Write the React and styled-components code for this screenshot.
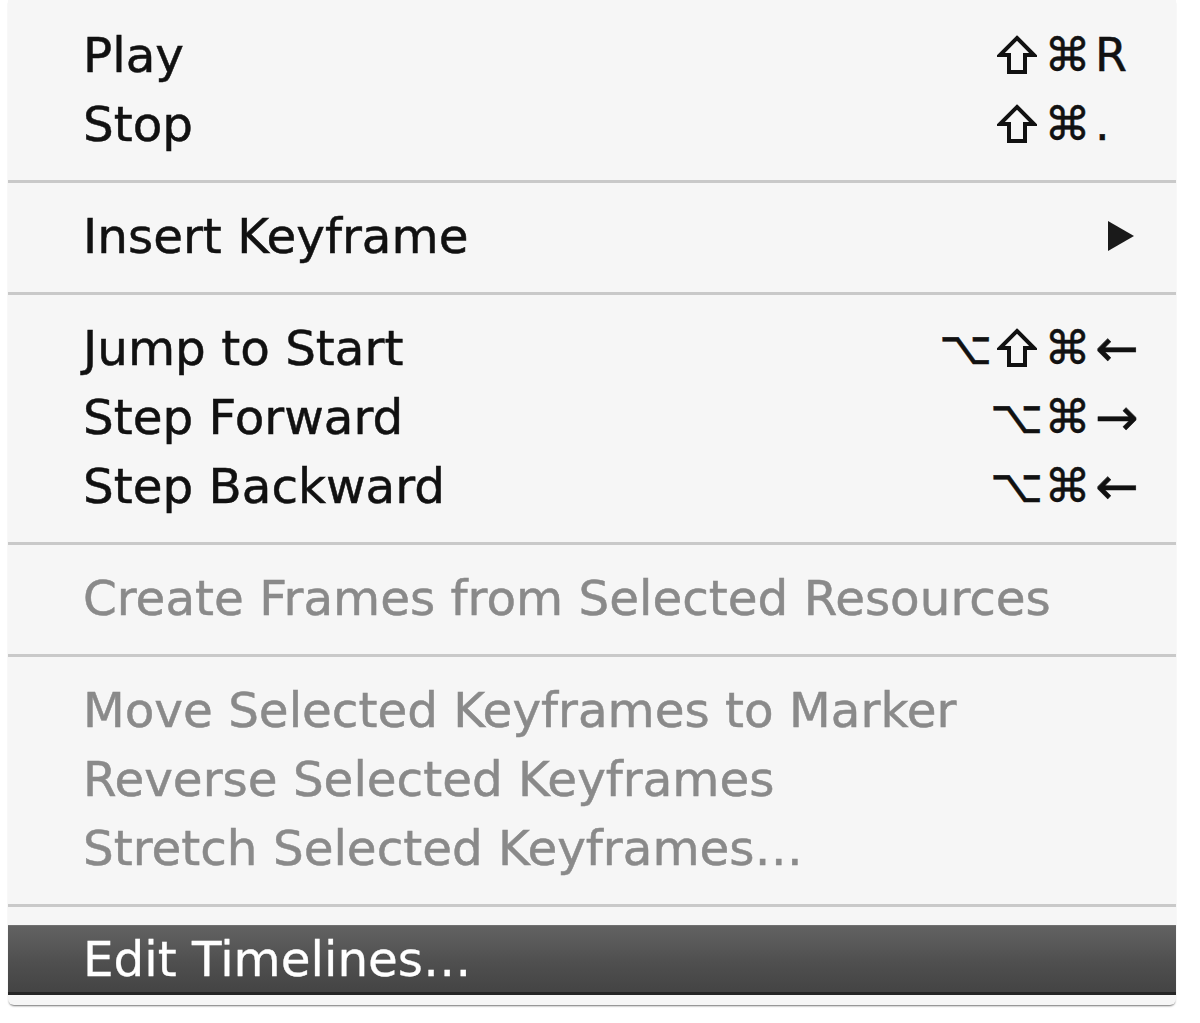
import React from 'react';
import styled, { createGlobalStyle } from 'styled-components';

const GlobalStyle = createGlobalStyle`
  html, body {
    margin: 0;
    padding: 0;
    background: #ffffff;
  }
  body {
    font-family: 'DejaVu Sans', 'Liberation Sans', sans-serif;
  }
`;

const Page = styled.div`
  width: 1200px;
  height: 1023px;
  background: #ffffff;
  padding: 0 24px 0 8px;
  box-sizing: border-box;
`;

const Menu = styled.div`
  width: 1168px;
  background: #f6f6f6;
  padding: 20px 0 10px;
  border-radius: 0 0 6px 6px;
  box-shadow: 0 2px 2px -1px rgba(0, 0, 0, 0.55);
`;

const Row = styled.div`
  height: ${({ $active }) => ($active ? '70px' : '69px')};
  display: flex;
  align-items: center;
  padding: 0 31px 0 75px;
  font-size: 48.4px;
  -webkit-text-stroke: ${({ $active }) => ($active ? '0.3px' : '0.5px')};
  color: ${({ $disabled, $active }) =>
    $active ? '#ffffff' : $disabled ? '#8a8a8a' : '#111111'};
  background: ${({ $active }) =>
    $active ? 'linear-gradient(#626262, #4f4f4f 55%, #444444)' : 'transparent'};
  border-top: ${({ $active }) => ($active ? '1px solid #707070' : 'none')};
  border-bottom: ${({ $active }) => ($active ? '3px solid #262626' : 'none')};
  box-sizing: border-box;
`;

const Label = styled.span`
  flex: 1;
  white-space: nowrap;
`;

const Shortcut = styled.span`
  display: flex;
  align-items: center;
  font-size: 46px;
`;

const Cell = styled.span`
  width: ${({ $key }) => ($key ? '50px' : '51px')};
  margin-left: ${({ $key }) => ($key ? '2px' : '0')};
  display: flex;
  justify-content: ${({ $key }) => ($key ? 'flex-start' : 'center')};
  align-items: center;
  font-size: ${({ $arrow }) => ($arrow ? '52px' : 'inherit')};
`;

const Separator = styled.div`
  height: 3px;
  margin: 22px 0 18px;
  background: #c9c9c9;
`;

const Arrow = styled.svg`
  width: 34px;
  height: 34px;
  margin-right: 7px;
`;

const ShiftIcon = () => (
  <svg width="40" height="40" viewBox="0 0 40 40">
    <path
      d="M20 3 L37 20 L28 20 L28 37 L12 37 L12 20 L3 20 Z"
      fill="none"
      stroke="#111"
      strokeWidth="4"
      strokeLinejoin="miter"
    />
  </svg>
);

const glyph = (g) => (g === 'shift' ? <ShiftIcon /> : g);

const groups = [
  [
    { label: 'Play', mods: ['shift', '⌘'], key: 'R' },
    { label: 'Stop', mods: ['shift', '⌘'], key: '.' },
  ],
  [{ label: 'Insert Keyframe', submenu: true }],
  [
    { label: 'Jump to Start', mods: ['⌥', 'shift', '⌘'], key: '←' },
    { label: 'Step Forward', mods: ['⌥', '⌘'], key: '→' },
    { label: 'Step Backward', mods: ['⌥', '⌘'], key: '←' },
  ],
  [{ label: 'Create Frames from Selected Resources', disabled: true }],
  [
    { label: 'Move Selected Keyframes to Marker', disabled: true },
    { label: 'Reverse Selected Keyframes', disabled: true },
    { label: 'Stretch Selected Keyframes…', disabled: true },
  ],
  [{ label: 'Edit Timelines…', active: true }],
];

const MenuRow = ({ item }) => (
  <Row $disabled={item.disabled} $active={item.active}>
    <Label>{item.label}</Label>
    {item.mods && (
      <Shortcut>
        {item.mods.map((m, i) => (
          <Cell key={i}>{glyph(m)}</Cell>
        ))}
        <Cell $key $arrow={item.key.length === 1 && item.key > '~'}>
          {item.key}
        </Cell>
      </Shortcut>
    )}
    {item.submenu && (
      <Arrow viewBox="0 0 34 34">
        <path d="M4 2 L30 17 L4 32 Z" fill="#1a1a1a" />
      </Arrow>
    )}
  </Row>
);

export default function App() {
  return (
    <Page>
      <GlobalStyle />
      <Menu>
        {groups.map((group, i) => (
          <React.Fragment key={i}>
            {i > 0 && <Separator />}
            {group.map((item) => (
              <MenuRow key={item.label} item={item} />
            ))}
          </React.Fragment>
        ))}
      </Menu>
    </Page>
  );
}
